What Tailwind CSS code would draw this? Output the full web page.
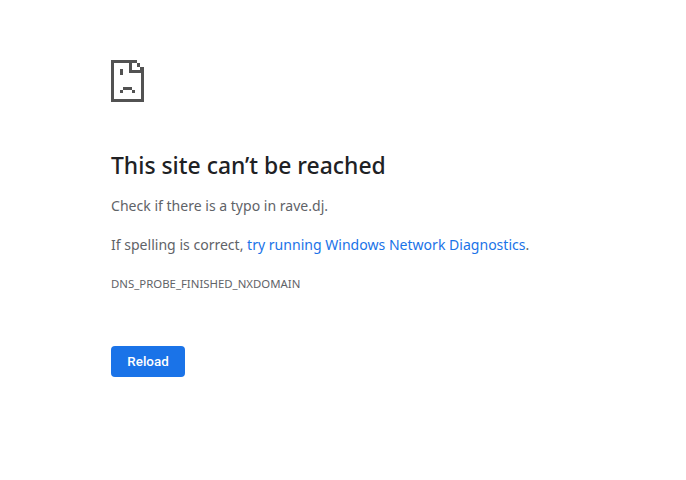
<!DOCTYPE html>
<html lang="en">
<head>
  <meta charset="UTF-8">
  <title>rave.dj</title>
  <script src="https://cdn.jsdelivr.net/npm/@tailwindcss/browser@4"></script>
</head>
<body class="bg-white font-['Noto_Sans','Open_Sans',sans-serif] text-[#5f6368]">
  <main class="w-[686px] h-[480px] pl-[111px] pt-[60px] flex flex-col items-start">
    <!-- sad page icon -->
    <svg class="block" width="33" height="42" viewBox="0 0 33 42" fill="#525252" shape-rendering="crispEdges">
      <path d="M0 0H26V3H3V39H30V10H33V42H0Z"/>
      <path d="M18 0H21V10H33V13H18Z"/>
      <path d="M26 3H29V7H26ZM29 7H33V10H29Z"/>
      <path d="M9 9H12V15H9Z"/>
      <path d="M12 27H21V30H12ZM9 30H12V33H9ZM21 30H24V33H21Z"/>
    </svg>
    <h1 class="mt-[48px] text-[22.9px] leading-[32px] font-medium text-[#202124]">This site can’t be reached</h1>
    <p class="mt-[12px] text-[14.05px] leading-[24px]">Check if there is a typo in rave.dj.</p>
    <p class="mt-[15px] text-[14.05px] leading-[24px]">If spelling is correct, <a class="text-[#1a73e8]">try running Windows Network Diagnostics</a>.</p>
    <p class="mt-[19px] text-[11.4px] leading-[16px]">DNS_PROBE_FINISHED_NXDOMAIN</p>
    <button class="mt-[54px] w-[74px] h-[31px] pt-[2px] rounded-[4px] bg-[#1a73e8] text-white text-[13.4px] font-medium font-['Roboto',sans-serif]">Reload</button>
  </main>
</body>
</html>
